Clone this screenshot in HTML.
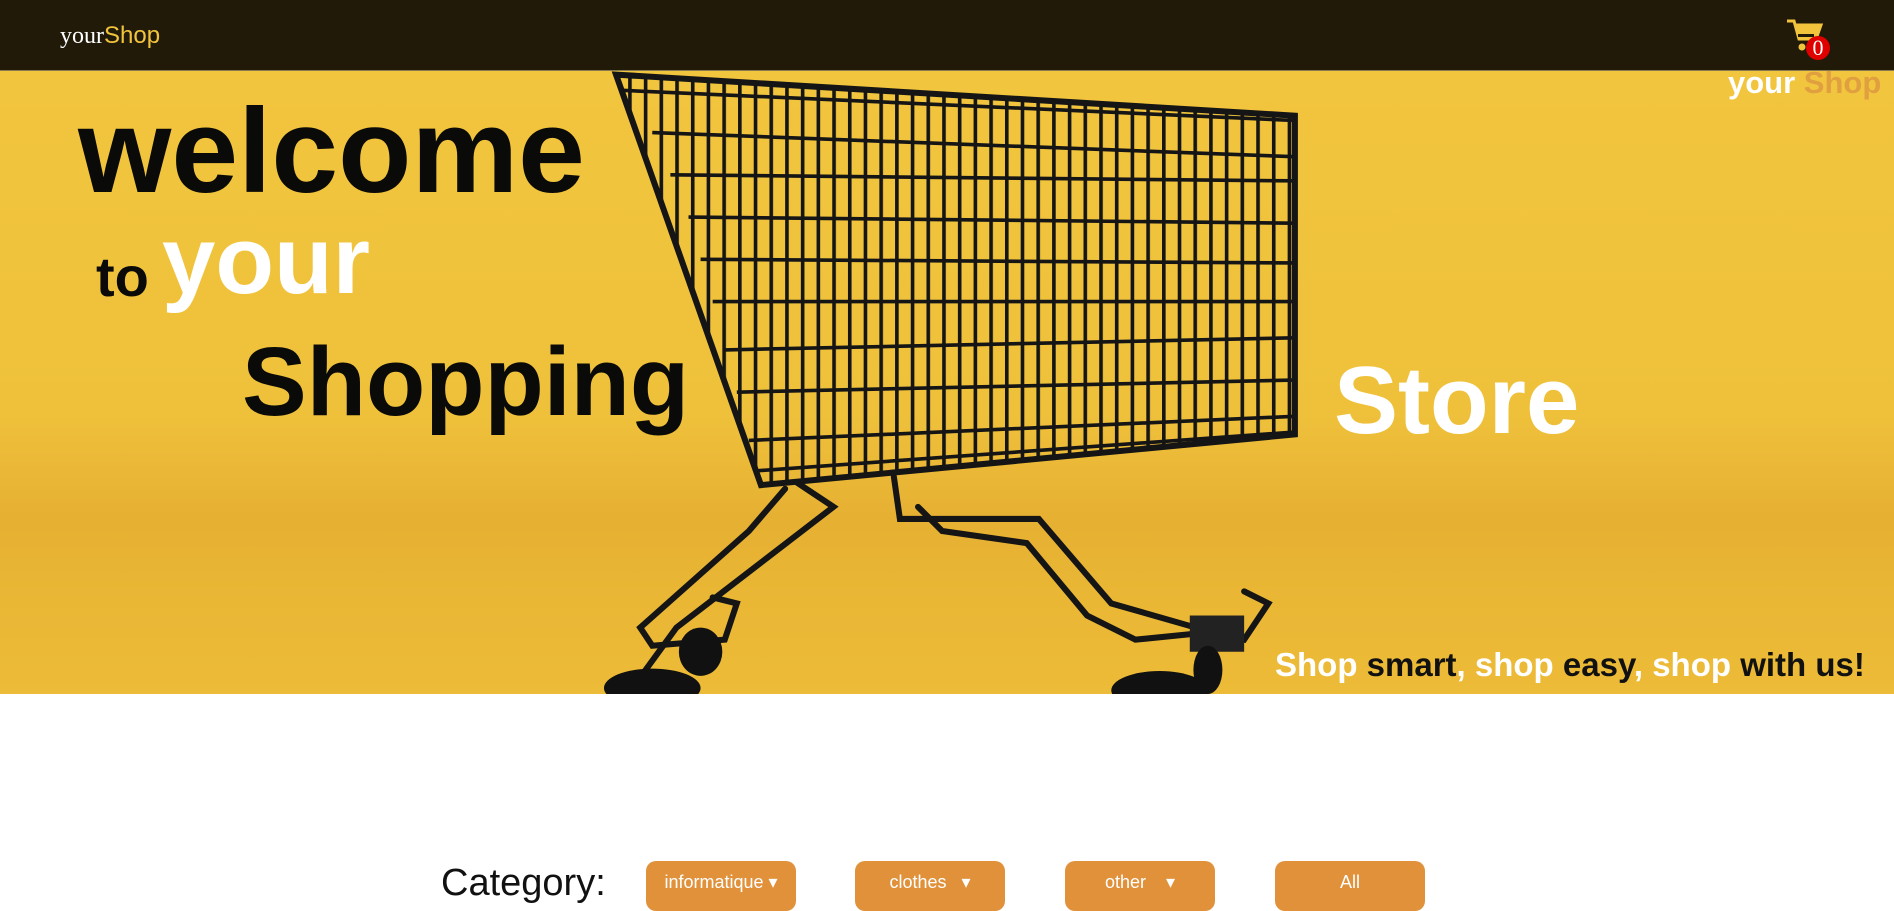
<!DOCTYPE html>
<html><head><meta charset="utf-8"><style>
*{margin:0;padding:0;box-sizing:border-box}
body{width:1894px;height:901px;overflow:hidden;background:#fff;font-family:"Liberation Sans",sans-serif;position:relative}
.nav{position:absolute;left:0;top:0;width:1894px;height:71px;background:#211a09;border-bottom:1px solid #8a7a50}
.logo{position:absolute;left:60px;top:22px;font-size:24px;color:#fff;font-family:"Liberation Serif",serif}
.logo span{color:#f2c43c;font-family:"Liberation Sans",sans-serif}
.hero{position:absolute;left:0;top:71px;width:1894px;height:623px;background:linear-gradient(#f2c53e 0%,#efc13b 55%,#e6b032 72%,#eab735 85%,#ecbb37 100%);overflow:hidden}
.t{position:absolute;font-weight:bold;line-height:1;white-space:nowrap}
.btn{position:absolute;top:861px;width:150px;height:50px;background:#e0913a;border-radius:10px;color:#fff;font-size:18px;padding-top:11px;text-align:center}
</style></head><body>
<div class="nav"><div class="logo">your<span>Shop</span></div>
<svg style="position:absolute;left:1786px;top:18px" width="40" height="34" viewBox="0 0 40 34"><path d="M1 3h7l5 18h17l5-14H10" fill="none" stroke="#f2c43c" stroke-width="3"/><path d="M10 7h25l-5 14H13z" fill="#f2c43c"/><rect x="12" y="16" width="16" height="3" fill="#211a09"/><circle cx="16" cy="29" r="3.5" fill="#f2c43c"/></svg>
<div style="position:absolute;left:1806px;top:36px;width:24px;height:24px;border-radius:50%;background:#e00000;color:#fff;font-family:'Liberation Serif',serif;font-size:22px;text-align:center;line-height:24px">0</div>
</div>
<div class="hero">
<svg style="position:absolute;left:0;top:0" width="1894" height="623" viewBox="0 59 1568 516" preserveAspectRatio="none">
<defs>
<pattern id="v" width="13" height="600" patternUnits="userSpaceOnUse"><rect x="0" y="0" width="3" height="600" fill="#151515"/></pattern>
<clipPath id="c"><polygon points="512,62 1072,96 1072,360 630,402"/></clipPath>
</defs>
<g clip-path="url(#c)"><rect x="500" y="55" width="580" height="360" fill="url(#v)"/>
<g stroke="#151515" stroke-width="3" fill="none">
<path d="M515 75 L1072 100"/><path d="M540 110 L1072 130"/><path d="M555 145 L1072 150"/><path d="M570 180 L1072 185"/><path d="M580 215 L1072 218"/><path d="M590 250 L1072 250"/><path d="M600 290 L1072 280"/><path d="M610 325 L1072 315"/><path d="M620 365 L1072 345"/><path d="M628 390 L1072 358"/>
</g></g>
<g stroke="#151515" stroke-width="5" fill="none" stroke-linecap="round">
<path d="M510 62 L1072 96 L1072 360 L630 402 Z"/>
<path d="M660 400 L690 420 L560 520 L520 575"/>
<path d="M650 405 L620 440 L530 520 L540 535 L600 530 L610 500 L590 495"/>
<path d="M740 395 L745 430 L860 430 L920 500 L990 520 L1030 530 L1050 500 L1030 490"/>
<path d="M760 420 L780 440 L850 450 L900 510 L940 530 L990 525"/>
</g>
<rect x="985" y="510" width="45" height="30" fill="#222"/>
<ellipse cx="540" cy="570" rx="40" ry="16" fill="#111"/>
<ellipse cx="960" cy="572" rx="40" ry="16" fill="#111"/>
<ellipse cx="1000" cy="555" rx="12" ry="20" fill="#111"/>
<ellipse cx="580" cy="540" rx="18" ry="20" fill="#111"/>
</svg>
<div class="t" style="left:78px;top:20px;font-size:120px;color:#0a0a08">welcome</div>
<div class="t" style="left:96px;top:178px;font-size:56px;color:#0a0a08">to</div>
<div class="t" style="left:162px;top:142px;font-size:96px;color:#fff">your</div>
<div class="t" style="left:242px;top:262px;font-size:97px;color:#0a0a08">Shopping</div>
<div class="t" style="left:1334px;top:282px;font-size:96px;color:#fff">Store</div>
<div class="t" style="left:1728px;top:-4px;font-size:31px;color:#fff">your <span style="color:#e0a040">Shop</span></div>
<div class="t" style="left:1275px;top:577px;font-size:33px;color:#fff">Shop <span style="color:#111">smart</span>, shop <span style="color:#111">easy</span>, shop <span style="color:#111">with us!</span></div>
</div>
<div style="position:absolute;left:441px;top:862px;font-size:38px;color:#111;font-weight:300">Category:</div>
<div class="btn" style="left:646px">informatique &#9662;</div>
<div class="btn" style="left:855px">clothes &nbsp;&nbsp;&#9662;</div>
<div class="btn" style="left:1065px">other &nbsp;&nbsp;&nbsp;&#9662;</div>
<div class="btn" style="left:1275px">All</div>
</body></html>
